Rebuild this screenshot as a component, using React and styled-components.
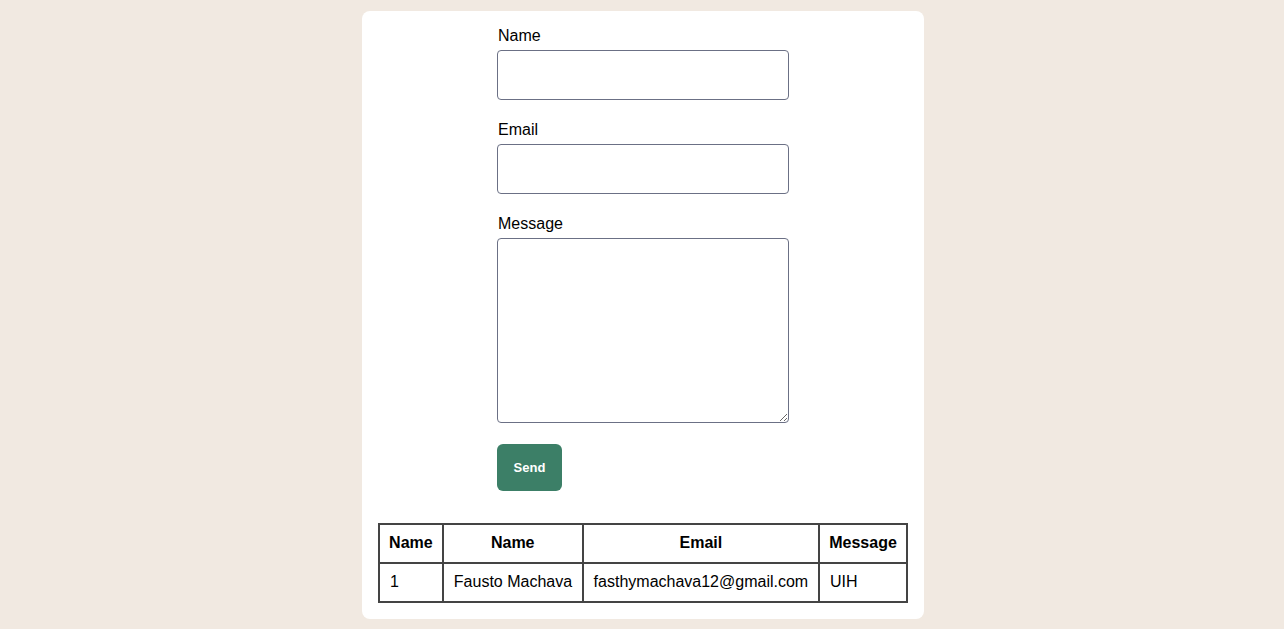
import React from 'react';
import styled, { createGlobalStyle } from 'styled-components';

const GlobalStyle = createGlobalStyle`
	body {
		margin: 0;
		background: #f1e9e1;
		font-family: 'Liberation Sans', Arial, sans-serif;
		color: #000;
	}
`;

const Page = styled.div`
	display: flex;
	justify-content: center;
	padding: 11px 0 0 2px;
`;

const Card = styled.div`
	width: 562px;
	box-sizing: border-box;
	background: #fff;
	border-radius: 8px;
	padding: 15px 16px 16px;
`;

const Form = styled.form`
	width: 292px;
	margin: 0 auto;
	display: flex;
	flex-direction: column;
`;

const Label = styled.label`
	font-size: 16px;
	line-height: 18px;
	padding: 1px 0 0 1px;
	margin-bottom: 5px;
`;

const Input = styled.input`
	box-sizing: border-box;
	height: 50px;
	width: 100%;
	border: 1px solid #6b7085;
	border-radius: 4px;
	margin: 0 0 20px;
	font-family: inherit;
	font-size: 16px;
`;

const TextArea = styled.textarea`
	box-sizing: border-box;
	height: 185px;
	width: 100%;
	border: 1px solid #6b7085;
	border-radius: 4px;
	margin: 0 0 21px;
	font-family: inherit;
	font-size: 16px;
`;

const Button = styled.button`
	align-self: flex-start;
	width: 65px;
	height: 47px;
	border: none;
	border-radius: 6px;
	background: #3c7f67;
	color: #fff;
	font-family: inherit;
	font-weight: bold;
	font-size: 13px;
`;

const Table = styled.table`
	width: 100%;
	margin-top: 32px;
	border-collapse: collapse;
	border: 2px solid #444;
	font-size: 16px;
`;

const Th = styled.th`
	border: 2px solid #444;
	padding: 9px 9px 10px;
	line-height: 18px;
	font-weight: bold;
	white-space: nowrap;
`;

const Td = styled.td`
	border: 2px solid #444;
	padding: 9px 9px 10px 10px;
	line-height: 18px;
	text-align: left;
	white-space: nowrap;
`;

const rows = [
	{ id: 1, name: 'Fausto Machava', email: 'fasthymachava12@gmail.com', message: 'UIH' },
];

export default function App() {
	return (
		<>
			<GlobalStyle />
			<Page>
				<Card>
					<Form onSubmit={(e) => e.preventDefault()}>
						<Label>Name</Label>
						<Input type="text" />
						<Label>Email</Label>
						<Input type="email" />
						<Label>Message</Label>
						<TextArea />
						<Button type="submit">Send</Button>
					</Form>
					<Table>
						<thead>
							<tr>
								<Th>Name</Th>
								<Th>Name</Th>
								<Th>Email</Th>
								<Th>Message</Th>
							</tr>
						</thead>
						<tbody>
							{rows.map((r) => (
								<tr key={r.id}>
									<Td>{r.id}</Td>
									<Td>{r.name}</Td>
									<Td>{r.email}</Td>
									<Td>{r.message}</Td>
								</tr>
							))}
						</tbody>
					</Table>
				</Card>
			</Page>
		</>
	);
}
